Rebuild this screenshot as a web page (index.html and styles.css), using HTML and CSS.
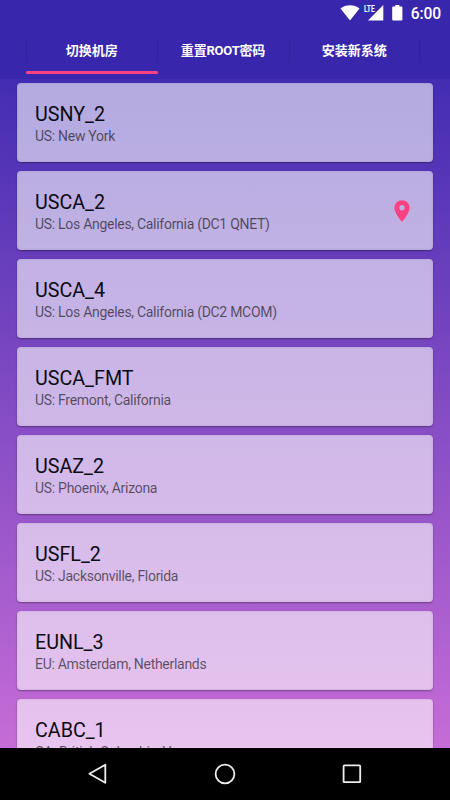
FILE: index.html
```
<!DOCTYPE html>
<html lang="zh-CN">
<head>
    <meta charset="UTF-8">
    <meta name="viewport" content="width=device-width, initial-scale=1.0">
    <title>切换机房</title>
    <link rel="stylesheet" href="styles.css">
</head>
<body>

    <div class="screen">
        <header class="app-header">
            <div class="status-bar">
                <svg class="icon-wifi" width="20" height="16" viewBox="0 0 20 16"><path d="M0.5 3.6C6 -0.8 14 -0.8 19.5 3.6L10 15.5Z"/></svg>
                <div class="signal">
                    <span class="lte">LTE</span>
                    <svg width="16" height="16" viewBox="0 0 16 16"><path d="M15.3 0V15.5H0Z"/></svg>
                </div>
                <svg class="icon-battery" width="11" height="16" viewBox="0 0 11 16"><path d="M3.2 0H7.4V1.4H9.4Q10.4 1.4 10.4 2.4V14.6Q10.4 15.6 9.4 15.6H1.2Q0.2 15.6 0.2 14.6V2.4Q0.2 1.4 1.2 1.4H3.2Z"/></svg>
                <span class="clock">6:00</span>
            </div>
            <nav class="tabs">
                <a class="tab active">切换机房</a>
                <a class="tab"><span class="tight">重置ROOT密码</span></a>
                <a class="tab">安装新系统</a>
            </nav>
        </header>

        <main class="server-list">
            <div class="card">
                <div class="info">
                    <h2>USNY_2</h2>
                    <p>US: New York</p>
                </div>
            </div>
            <div class="card">
                <div class="info">
                    <h2>USCA_2</h2>
                    <p>US: Los Angeles, California (DC1 QNET)</p>
                </div>
                <svg class="icon-pin" width="26" height="26" viewBox="0 0 24 24"><path d="M12 2C8.13 2 5 5.13 5 9c0 5.25 7 13 7 13s7-7.75 7-13c0-3.87-3.13-7-7-7zm0 9.5c-1.38 0-2.5-1.12-2.5-2.5s1.12-2.5 2.5-2.5 2.5 1.12 2.5 2.5-1.12 2.5-2.5 2.5z"/></svg>
            </div>
            <div class="card">
                <div class="info">
                    <h2>USCA_4</h2>
                    <p>US: Los Angeles, California (DC2 MCOM)</p>
                </div>
            </div>
            <div class="card">
                <div class="info">
                    <h2>USCA_FMT</h2>
                    <p>US: Fremont, California</p>
                </div>
            </div>
            <div class="card">
                <div class="info">
                    <h2>USAZ_2</h2>
                    <p>US: Phoenix, Arizona</p>
                </div>
            </div>
            <div class="card">
                <div class="info">
                    <h2>USFL_2</h2>
                    <p>US: Jacksonville, Florida</p>
                </div>
            </div>
            <div class="card">
                <div class="info">
                    <h2>EUNL_3</h2>
                    <p>EU: Amsterdam, Netherlands</p>
                </div>
            </div>
            <div class="card">
                <div class="info">
                    <h2>CABC_1</h2>
                    <p>CA: British Columbia, Vancouver</p>
                </div>
            </div>
        </main>

        <footer class="nav-bar">
            <svg width="24" height="24" viewBox="0 0 24 24"><path d="M19.3 2.8V20.8L3.4 11.8Z"/></svg>
            <svg width="24" height="24" viewBox="0 0 24 24"><circle cx="12" cy="12" r="9.4"/></svg>
            <svg width="24" height="24" viewBox="0 0 24 24"><rect x="3.6" y="3.4" width="16.6" height="16.8" rx="0.8"/></svg>
        </footer>
    </div>

</body>
</html>
```
FILE: styles.css
```
:root {
    --header: #3826ac;
    --accent: #ff4081;
}

* {
    margin: 0;
    padding: 0;
    box-sizing: border-box;
}

body {
    font-family: Roboto, 'Noto Sans CJK SC', sans-serif;
    background: #000;
}

.screen {
    width: 450px;
    height: 800px;
    display: flex;
    flex-direction: column;
    overflow: hidden;
    background: linear-gradient(#3425ae, #c86dd7 760px);
}

/* header */
.app-header {
    height: 79px;
    flex-shrink: 0;
    background: var(--header);
}

.status-bar {
    height: 26px;
    padding-right: 9px;
    display: flex;
    justify-content: flex-end;
    align-items: center;
    color: #fff;
}
.status-bar svg {
    fill: #fff;
    display: block;
}
.signal {
    position: relative;
    margin: 0 8px 0 8px;
}
.lte {
    position: absolute;
    left: -4px;
    top: 0;
    font-size: 9.5px;
    line-height: 8px;
    font-weight: 700;
    transform: scaleX(0.7);
    transform-origin: left;
}
.clock {
    margin-left: 8px;
    padding-top: 2px;
    font-size: 15.6px;
    font-weight: 500;
    line-height: 26px;
    letter-spacing: -0.1px;
}

.tabs {
    display: flex;
    margin: 0 30px 0 26px;
    height: 48px;
}
.tab {
    flex: 1;
    position: relative;
    text-align: center;
    line-height: 49px;
    font-size: 13px;
    font-weight: 700;
    color: #fff;
}
.tight {
    letter-spacing: -0.2px;
}
.tab::before,
.tab:last-child::after {
    content: '';
    position: absolute;
    left: 0;
    top: 13px;
    width: 1px;
    height: 23px;
    background: rgba(0, 0, 0, 0.1);
}
.tab:last-child::after {
    left: auto;
    right: 0;
}
.tab.active::after {
    content: '';
    position: absolute;
    left: 0;
    right: -1px;
    bottom: 0;
    height: 3px;
    border-radius: 1.5px;
    background: var(--accent);
}

/* cards */
.server-list {
    flex: 1;
    min-height: 0;
    padding: 4px 17px 0 17px;
    display: flex;
    flex-direction: column;
    gap: 9px;
    overflow: hidden;
}
.card {
    height: 79px;
    flex-shrink: 0;
    display: flex;
    align-items: center;
    justify-content: space-between;
    padding: 0 18px;
    border-radius: 4px;
    background: rgba(255, 255, 255, 0.6);
    box-shadow: 0 1px 2px rgba(0, 0, 0, 0.35), inset 0 0 2px 1px rgba(0, 0, 0, 0.05);
}
.info {
    padding-top: 3px;
}
.card h2 {
    font-size: 19.7px;
    font-weight: 400;
    line-height: 24px;
    color: #0b0b16;
}
.card p {
    font-size: 14px;
    line-height: 18px;
    letter-spacing: -0.29px;
    color: rgba(0, 0, 0, 0.6);
}
.icon-pin {
    fill: var(--accent);
}

/* bottom navigation */
.nav-bar {
    height: 52px;
    flex-shrink: 0;
    background: #000;
    display: flex;
    justify-content: center;
    align-items: center;
    gap: 103px;
}
.nav-bar svg {
    fill: none;
    stroke: #eee;
    stroke-width: 1.8;
    stroke-linejoin: round;
}
```
